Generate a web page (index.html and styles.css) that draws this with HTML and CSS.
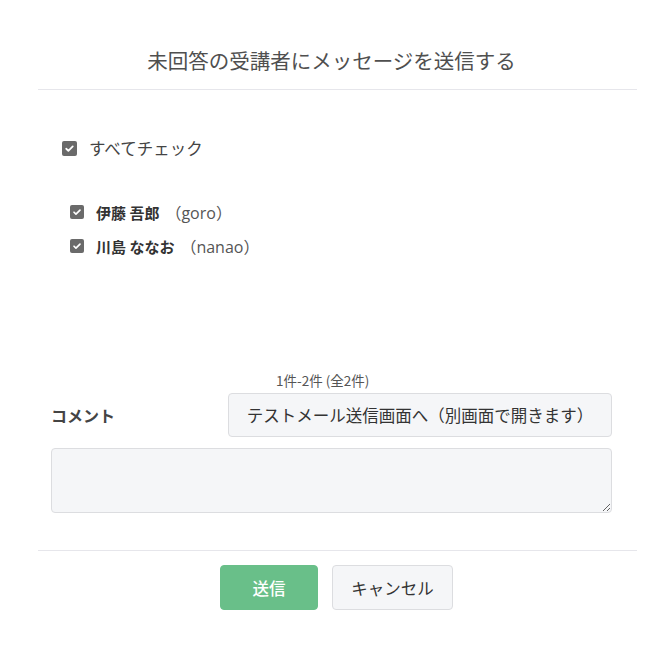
FILE: index.html
```html
<!DOCTYPE html>
<html lang="ja">
<head>
<meta charset="utf-8">
<link rel="stylesheet" href="styles.css">
</head>
<body>
<div class="modal">
  <div class="modal-header">
    <h1 class="title">未回答の受講者にメッセージを送信する</h1>
  </div>
  <div class="modal-body">
    <label class="check-all">
      <span class="cb cb-lg"><svg viewBox="0 0 16 16"><path d="M4 8.3l2.6 2.6L12 5.4" fill="none" stroke="#fff" stroke-width="2.2" stroke-linecap="round" stroke-linejoin="round"/></svg></span>
      <span>すべてチェック</span>
    </label>
    <ul class="users">
      <li class="user">
        <span class="cb"><svg viewBox="0 0 16 16"><path d="M4 8.3l2.6 2.6L12 5.4" fill="none" stroke="#fff" stroke-width="2.2" stroke-linecap="round" stroke-linejoin="round"/></svg></span>
        <span class="name">伊藤 吾郎</span>
        <span class="login">（goro）</span>
      </li>
      <li class="user">
        <span class="cb"><svg viewBox="0 0 16 16"><path d="M4 8.3l2.6 2.6L12 5.4" fill="none" stroke="#fff" stroke-width="2.2" stroke-linecap="round" stroke-linejoin="round"/></svg></span>
        <span class="name">川島 ななお</span>
        <span class="login">（nanao）</span>
      </li>
    </ul>
    <div class="count">1件-2件 (全2件)</div>
    <div class="comment-row">
      <span class="comment-label">コメント</span>
      <button class="btn btn-light test-btn">テストメール送信画面へ（別画面で開きます）</button>
    </div>
    <textarea class="comment"></textarea>
  </div>
  <div class="modal-footer">
    <button class="btn btn-send">送信</button>
    <button class="btn btn-light btn-cancel">キャンセル</button>
  </div>
</div>
</body>
</html>
```
FILE: styles.css
```css
* { box-sizing: border-box; }
html, body {
  margin: 0;
  padding: 0;
  background: #fff;
}
body {
  font-family: "Noto Sans CJK JP", "Noto Sans", sans-serif;
  color: #333;
  width: 653px;
}
.modal {
  width: 653px;
}
.modal-header {
  margin: 0 16px 0 38px;
  padding: 46px 0 14px;
  border-bottom: 1px solid #e6e6eb;
  text-align: center;
}
.title {
  margin: 0;
  font-size: 20.5px;
  line-height: 29px;
  font-weight: 400;
  color: #4f4f4f;
  padding-right: 12px;
}
.modal-body {
  padding: 46px 41px 0 51px;
}
.check-all {
  display: flex;
  align-items: center;
  gap: 12px;
  margin-left: 11px;
  font-size: 16.5px;
  line-height: 24px;
  color: #444;
}
.cb {
  width: 14px;
  height: 14px;
  border-radius: 2px;
  background: #6a6a6a;
  display: inline-flex;
  align-items: center;
  justify-content: center;
  flex: none;
}
.cb svg { width: 12px; height: 12px; }
.cb-lg { width: 15px; height: 15px; }
.cb-lg svg { width: 13px; height: 13px; }
.users {
  list-style: none;
  margin: 40px 0 0;
  padding: 0 0 0 19px;
  display: flex;
  flex-direction: column;
  gap: 10px;
}
.user {
  display: flex;
  align-items: center;
  height: 24px;
  font-size: 15px;
}
.user .cb { margin-right: 12px; }
.name {
  font-weight: 700;
  color: #333;
}
.login {
  font-family: "Open Sans", "Noto Sans CJK JP", sans-serif;
  color: #555;
  font-size: 16px;
  margin-left: 6px;
}
.count {
  margin-top: 113px;
  font-size: 13.5px;
  line-height: 18px;
  color: #555;
  padding-left: 225px;
}
.comment-row {
  display: flex;
  align-items: center;
  justify-content: space-between;
  margin-top: 4px;
}
.comment-label {
  font-size: 16px;
  font-weight: 700;
  color: #444;
}
.btn {
  font-family: "Noto Sans CJK JP", "Noto Sans", sans-serif;
  font-size: 16.5px;
  border-radius: 4px;
  cursor: pointer;
}
.btn-light {
  background: #f5f6f8;
  border: 1px solid #dcdde0;
  color: #333;
  font-weight: 400;
}
.test-btn {
  width: 384px;
  height: 44px;
  padding: 0;
}
.comment {
  display: block;
  width: 561px;
  height: 65px;
  margin-top: 11px;
  background: #f5f6f8;
  border: 1px solid #dcdde0;
  border-radius: 4px;
  resize: vertical;
}
.modal-footer {
  margin: 37px 16px 0 38px;
  border-top: 1px solid #e6e6eb;
  padding: 14px 0 0 182px;
  display: flex;
  gap: 14px;
}
.btn-send {
  width: 98px;
  height: 45px;
  background: #69bf89;
  border: 1px solid #69bf89;
  color: #fff;
  font-weight: 500;
}
.btn-cancel {
  width: 121px;
  height: 45px;
}
```
